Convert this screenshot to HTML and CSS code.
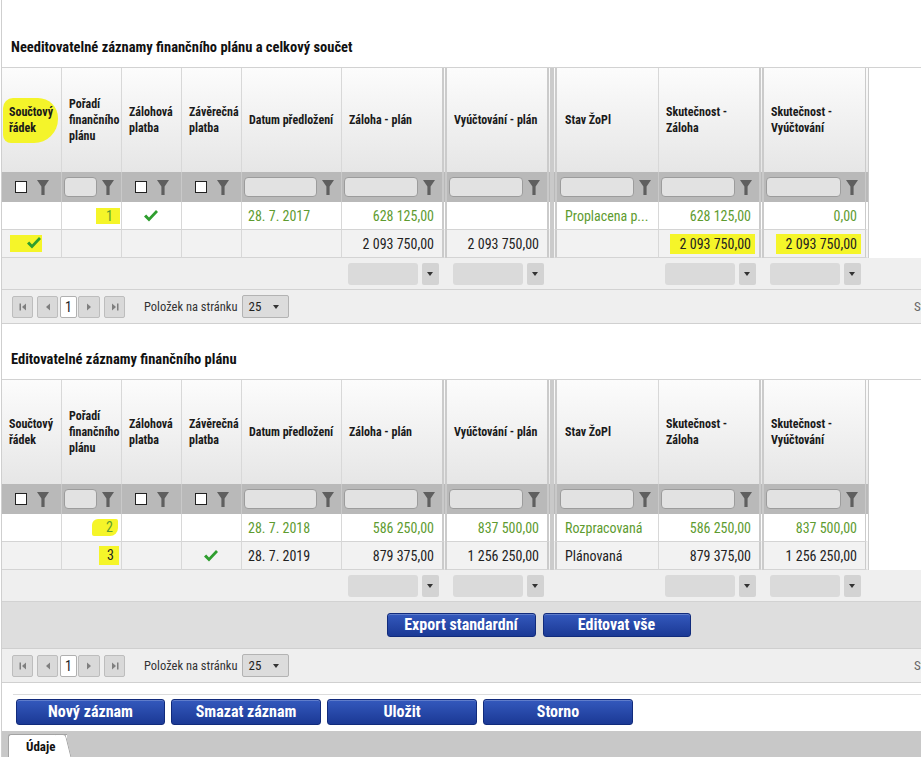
FILE: index.html
```html
<!DOCTYPE html>
<html lang="cs">
<head>
<meta charset="utf-8">
<title>Finanční plán</title>
<link rel="stylesheet" href="styles.css">
</head>
<body>
<div class="page">

  <h2 class="sec-title first">Needitovatelné záznamy finančního plánu a celkový součet</h2>
  <div class="grid">
    <div class="row head">
      <div class="c c1h"><span class="hl-head">Součtový<br>řádek</span></div>
      <div class="c">Pořadí<br>finančního<br>plánu</div>
      <div class="c">Zálohová<br>platba</div>
      <div class="c">Závěrečná<br>platba</div>
      <div class="c">Datum předložení</div>
      <div class="c dbl">Záloha - plán</div>
      <div class="c dbl">Vyúčtování - plán</div>
      <div class="c dbl-l">Stav ŽoPl</div>
      <div class="c dbl">Skutečnost -<br>Záloha</div>
      <div class="c end">Skutečnost -<br>Vyúčtování</div>
    </div>
    <div class="row filter">
      <div class="c chk"><span class="cb"></span><svg class="fn" viewBox="0 0 12 16"><path d="M0 1H12L7.6 7.5V16H4.4V7.5Z"/></svg></div>
      <div class="c"><span class="inp"></span><svg class="fn" viewBox="0 0 12 16"><path d="M0 1H12L7.6 7.5V16H4.4V7.5Z"/></svg></div>
      <div class="c chk"><span class="cb"></span><svg class="fn" viewBox="0 0 12 16"><path d="M0 1H12L7.6 7.5V16H4.4V7.5Z"/></svg></div>
      <div class="c chk"><span class="cb"></span><svg class="fn" viewBox="0 0 12 16"><path d="M0 1H12L7.6 7.5V16H4.4V7.5Z"/></svg></div>
      <div class="c"><span class="inp"></span><svg class="fn" viewBox="0 0 12 16"><path d="M0 1H12L7.6 7.5V16H4.4V7.5Z"/></svg></div>
      <div class="c dbl"><span class="inp"></span><svg class="fn" viewBox="0 0 12 16"><path d="M0 1H12L7.6 7.5V16H4.4V7.5Z"/></svg></div>
      <div class="c dbl"><span class="inp"></span><svg class="fn" viewBox="0 0 12 16"><path d="M0 1H12L7.6 7.5V16H4.4V7.5Z"/></svg></div>
      <div class="c dbl-l"><span class="inp"></span><svg class="fn" viewBox="0 0 12 16"><path d="M0 1H12L7.6 7.5V16H4.4V7.5Z"/></svg></div>
      <div class="c dbl"><span class="inp"></span><svg class="fn" viewBox="0 0 12 16"><path d="M0 1H12L7.6 7.5V16H4.4V7.5Z"/></svg></div>
      <div class="c end"><span class="inp"></span><svg class="fn" viewBox="0 0 12 16"><path d="M0 1H12L7.6 7.5V16H4.4V7.5Z"/></svg></div>
    </div>
    <div class="row data green">
      <div class="c"></div>
      <div class="c r"><span class="hl hl-num">1</span></div>
      <div class="c ctr"><svg class="ok" viewBox="0 0 14 12"><path d="M0 6.5L2.2 4.6L5 7.4L12 0L14 2L5 11.5Z"/></svg></div>
      <div class="c"></div>
      <div class="c">28. 7. 2017</div>
      <div class="c dbl r">628 125,00</div>
      <div class="c dbl r"></div>
      <div class="c dbl-l">Proplacena p...</div>
      <div class="c dbl r">628 125,00</div>
      <div class="c end r">0,00</div>
    </div>
    <div class="row data alt">
      <div class="c c1s"><span class="hl hl-chk"><svg class="ok" viewBox="0 0 14 12"><path d="M0 6.5L2.2 4.6L5 7.4L12 0L14 2L5 11.5Z"/></svg></span></div>
      <div class="c"></div>
      <div class="c"></div>
      <div class="c"></div>
      <div class="c"></div>
      <div class="c dbl r">2 093 750,00</div>
      <div class="c dbl r">2 093 750,00</div>
      <div class="c dbl-l"></div>
      <div class="c dbl r"><span class="hl hl-sum">2 093 750,00</span></div>
      <div class="c end r"><span class="hl hl-sum">2 093 750,00</span></div>
    </div>
    <div class="row foot">
      <div class="c"></div><div class="c"></div><div class="c"></div><div class="c"></div><div class="c"></div>
      <div class="c"><span class="dd"></span><span class="dd-btn"></span></div>
      <div class="c"><span class="dd"></span><span class="dd-btn"></span></div>
      <div class="c"></div>
      <div class="c"><span class="dd"></span><span class="dd-btn"></span></div>
      <div class="c"><span class="dd"></span><span class="dd-btn"></span></div>
    </div>
    <div class="pager">
      <span class="pb"><svg viewBox="0 0 10 10"><rect x="1.5" y="1.5" width="1.5" height="7"/><path d="M8 1.5V8.5L4 5Z"/></svg></span>
      <span class="pb pb-prev"><svg viewBox="0 0 10 10"><path d="M7 1.5V8.5L3 5Z"/></svg></span>
      <span class="pnum">1</span>
      <span class="pb pb-next"><svg viewBox="0 0 10 10"><path d="M3 1.5V8.5L7 5Z"/></svg></span>
      <span class="pb pb-last"><svg viewBox="0 0 10 10"><path d="M2 1.5V8.5L6 5Z"/><rect x="7" y="1.5" width="1.5" height="7"/></svg></span>
      <span class="plabel">Položek na stránku</span>
      <span class="sel">25<span class="sel-ar"></span></span>
      <span class="pinfo">Stránka 1 z 1</span>
    </div>
  </div>

  <h2 class="sec-title">Editovatelné záznamy finančního plánu</h2>
  <div class="grid">
    <div class="row head">
      <div class="c">Součtový<br>řádek</div>
      <div class="c">Pořadí<br>finančního<br>plánu</div>
      <div class="c">Zálohová<br>platba</div>
      <div class="c">Závěrečná<br>platba</div>
      <div class="c">Datum předložení</div>
      <div class="c dbl">Záloha - plán</div>
      <div class="c dbl">Vyúčtování - plán</div>
      <div class="c dbl-l">Stav ŽoPl</div>
      <div class="c dbl">Skutečnost -<br>Záloha</div>
      <div class="c end">Skutečnost -<br>Vyúčtování</div>
    </div>
    <div class="row filter">
      <div class="c chk"><span class="cb"></span><svg class="fn" viewBox="0 0 12 16"><path d="M0 1H12L7.6 7.5V16H4.4V7.5Z"/></svg></div>
      <div class="c"><span class="inp"></span><svg class="fn" viewBox="0 0 12 16"><path d="M0 1H12L7.6 7.5V16H4.4V7.5Z"/></svg></div>
      <div class="c chk"><span class="cb"></span><svg class="fn" viewBox="0 0 12 16"><path d="M0 1H12L7.6 7.5V16H4.4V7.5Z"/></svg></div>
      <div class="c chk"><span class="cb"></span><svg class="fn" viewBox="0 0 12 16"><path d="M0 1H12L7.6 7.5V16H4.4V7.5Z"/></svg></div>
      <div class="c"><span class="inp"></span><svg class="fn" viewBox="0 0 12 16"><path d="M0 1H12L7.6 7.5V16H4.4V7.5Z"/></svg></div>
      <div class="c dbl"><span class="inp"></span><svg class="fn" viewBox="0 0 12 16"><path d="M0 1H12L7.6 7.5V16H4.4V7.5Z"/></svg></div>
      <div class="c dbl"><span class="inp"></span><svg class="fn" viewBox="0 0 12 16"><path d="M0 1H12L7.6 7.5V16H4.4V7.5Z"/></svg></div>
      <div class="c dbl-l"><span class="inp"></span><svg class="fn" viewBox="0 0 12 16"><path d="M0 1H12L7.6 7.5V16H4.4V7.5Z"/></svg></div>
      <div class="c dbl"><span class="inp"></span><svg class="fn" viewBox="0 0 12 16"><path d="M0 1H12L7.6 7.5V16H4.4V7.5Z"/></svg></div>
      <div class="c end"><span class="inp"></span><svg class="fn" viewBox="0 0 12 16"><path d="M0 1H12L7.6 7.5V16H4.4V7.5Z"/></svg></div>
    </div>
    <div class="row data green">
      <div class="c"></div>
      <div class="c r"><span class="hl hl-num2">2</span></div>
      <div class="c"></div>
      <div class="c"></div>
      <div class="c">28. 7. 2018</div>
      <div class="c dbl r">586 250,00</div>
      <div class="c dbl r">837 500,00</div>
      <div class="c dbl-l">Rozpracovaná</div>
      <div class="c dbl r">586 250,00</div>
      <div class="c end r">837 500,00</div>
    </div>
    <div class="row data alt">
      <div class="c"></div>
      <div class="c r"><span class="hl hl-num3">3</span></div>
      <div class="c"></div>
      <div class="c ctr"><svg class="ok" viewBox="0 0 14 12"><path d="M0 6.5L2.2 4.6L5 7.4L12 0L14 2L5 11.5Z"/></svg></div>
      <div class="c">28. 7. 2019</div>
      <div class="c dbl r">879 375,00</div>
      <div class="c dbl r">1 256 250,00</div>
      <div class="c dbl-l">Plánovaná</div>
      <div class="c dbl r">879 375,00</div>
      <div class="c end r">1 256 250,00</div>
    </div>
    <div class="row foot">
      <div class="c"></div><div class="c"></div><div class="c"></div><div class="c"></div><div class="c"></div>
      <div class="c"><span class="dd"></span><span class="dd-btn"></span></div>
      <div class="c"><span class="dd"></span><span class="dd-btn"></span></div>
      <div class="c"></div>
      <div class="c"><span class="dd"></span><span class="dd-btn"></span></div>
      <div class="c"><span class="dd"></span><span class="dd-btn"></span></div>
    </div>
    <div class="btnbar">
      <button class="btn w149">Export standardní</button>
      <button class="btn w148">Editovat vše</button>
    </div>
    <div class="pager">
      <span class="pb"><svg viewBox="0 0 10 10"><rect x="1.5" y="1.5" width="1.5" height="7"/><path d="M8 1.5V8.5L4 5Z"/></svg></span>
      <span class="pb pb-prev"><svg viewBox="0 0 10 10"><path d="M7 1.5V8.5L3 5Z"/></svg></span>
      <span class="pnum">1</span>
      <span class="pb pb-next"><svg viewBox="0 0 10 10"><path d="M3 1.5V8.5L7 5Z"/></svg></span>
      <span class="pb pb-last"><svg viewBox="0 0 10 10"><path d="M2 1.5V8.5L6 5Z"/><rect x="7" y="1.5" width="1.5" height="7"/></svg></span>
      <span class="plabel">Položek na stránku</span>
      <span class="sel">25<span class="sel-ar"></span></span>
      <span class="pinfo">Stránka 1 z 1</span>
    </div>
  </div>

  <div class="toolbar">
    <button class="btn w149">Nový záznam</button>
    <button class="btn w150">Smazat záznam</button>
    <button class="btn w150">Uložit</button>
    <button class="btn w150">Storno</button>
  </div>

  <div class="tabs">
    <span class="tab">Údaje</span>
  </div>
</div>
</body>
</html>
```

FILE: styles.css
```css
* { box-sizing: border-box; margin: 0; padding: 0; }
html, body { overflow: hidden; background: #fff; }
body {
  width: 921px;
  height: 757px;
  font-family: "Roboto Condensed", "Liberation Sans Narrow", "Arial Narrow", "DejaVu Sans Condensed", sans-serif;
  font-stretch: condensed;
  color: #222;
}
.page {
  margin-left: 1px;
  width: 1074px;
  min-height: 757px;
  border-left: 1px solid #cfcfcf;
}
.sec-title {
  font-size: 14.5px;
  font-weight: bold;
  line-height: 20px;
  padding: 26px 0 9px 9px;
  color: #111;
}
.sec-title.first { padding-top: 38px; }

.grid { border-top: 1px solid #d2d2d2; }
.row {
  display: grid;
  grid-template-columns: 60px 60px 60px 60px 100px 105px 105px 107px 105px 105px;
  width: 867px;
}
.c {
  display: flex;
  align-items: center;
  min-width: 0;
  padding: 0 8px 0 6px;
  border-right: 1px solid #d8d8d8;
  white-space: nowrap;
  overflow: hidden;
}
.c.dbl { border-right: 5px double #cbcbcb; }
.c.dbl-l { border-left: 5px double #cbcbcb; padding-left: 8px; }
.c.end { border-right: 4px double #cbcbcb; }
.c.r { justify-content: flex-end; }
.c.ctr { justify-content: center; }

/* header */
.head .c {
  height: 104px;
  background: linear-gradient(#fcfcfc, #e6e6e6);
  font-size: 12px;
  font-weight: bold;
  line-height: 16px;
  color: #1a1a1a;
  padding-left: 7px;
}
.head .c.dbl-l { padding-left: 8px; }
.head .c.c1h { padding-left: 1px; }
.hl-head {
  display: inline-block;
  background: #f4f42a;
  padding: 6px 5px 7px 6px;
  border-radius: 10px 20px 24px 8px;
}

/* filter row */
.filter .c {
  height: 30px;
  background: #b9b9b9;
  border-right-color: #c9c9c9;
  padding: 0 7px 0 2px;
  gap: 5px;
}
.filter .c.dbl, .filter .c.end { border-right-color: #c9c9c9; }
.filter .c.dbl-l { border-left-color: #c9c9c9; padding-left: 3px; }
.filter .c.chk { justify-content: center; gap: 10px; padding: 0; }
.inp {
  flex: 1;
  height: 20px;
  background: #e2e2e2;
  border: 1px solid #9c9c9c;
  border-radius: 4px;
}
.cb {
  width: 12px;
  height: 12px;
  background: #fff;
  border: 1.5px solid #222;
}
.fn { width: 12px; height: 16px; fill: #5f5f5f; flex: none; }

/* data rows */
.data .c {
  height: 28px;
  font-size: 14px;
  border-bottom: 1px solid #d4d4d4;
  background: #fff;
}
.data.alt .c { background: #f2f2f2; }
.data.green .c { color: #5e9b30; }
.ok { width: 14px; height: 12px; fill: #2e9e2e; }
.hl { background: #f5f529; }
.hl-num { padding: 0 7px 0 10px; margin-right: -7px; }
.hl-num2 { padding: 0 5px 1px 14px; margin-right: -5px; border-radius: 6px 2px 8px 2px; }
.hl-num3 { padding: 1px 5px 2px 8px; margin-right: -6px; }
.c.c1s { padding-left: 8px; }
.hl-chk {
  display: inline-flex;
  justify-content: flex-end;
  width: 32px;
  height: 17px;
  padding: 2px 1px 0 0;
}
.hl-sum { padding: 2px 4px 2px 10px; margin-right: -4px; }

/* footer aggregate row */
.foot {
  width: 100%;
  background: #efefef;
  border-bottom: 1px solid #d2d2d2;
}
.foot .c {
  height: 31px;
  border: none;
  padding: 0 0 0 6px;
  gap: 4px;
}
.dd {
  width: 70px;
  height: 22px;
  background: #dadada;
  border-radius: 3px;
}
.dd-btn {
  position: relative;
  width: 17px;
  height: 22px;
  background: #d3d3d3;
  border-radius: 2px;
}
.dd-btn::after {
  content: "";
  position: absolute;
  left: 5px;
  top: 9px;
  border-left: 3.5px solid transparent;
  border-right: 3.5px solid transparent;
  border-top: 4px solid #333;
}

/* pager */
.pager {
  display: flex;
  align-items: center;
  height: 34px;
  padding: 0 11px 0 10px;
  background: #efefef;
  border-bottom: 1px solid #d0d0d0;
  font-size: 12px;
  color: #333;
}
.pb {
  display: flex;
  align-items: center;
  justify-content: center;
  width: 21px;
  height: 22px;
  background: #d9d9d9;
  border: 1px solid #bdbdbd;
  border-radius: 2px;
}
.pb svg { width: 10px; height: 10px; fill: #7f7f7f; }
.pb-prev { margin-left: 4px; }
.pnum {
  width: 17px;
  height: 22px;
  margin: 0 1px 0 2px;
  background: #fff;
  border: 1px solid #b0b0b0;
  border-radius: 2px;
  font-size: 14px;
  line-height: 20px;
  text-align: center;
  color: #222;
}
.pb-next { width: 22px; }
.pb-last { margin-left: 4px; }
.plabel { margin-left: 19px; font-size: 12.5px; color: #333; }
.sel {
  position: relative;
  width: 47px;
  height: 23px;
  margin-left: 4px;
  padding-left: 6px;
  background: #dcdcdc;
  border: 1px solid #b3b3b3;
  border-radius: 2px;
  font-size: 13px;
  line-height: 21px;
  color: #222;
}
.sel-ar {
  position: absolute;
  right: 9px;
  top: 9px;
  border-left: 3.5px solid transparent;
  border-right: 3.5px solid transparent;
  border-top: 4px solid #333;
}
.pinfo { margin-left: auto; width: 150px; color: #666; font-size: 13px; }

/* button bars */
.btnbar {
  display: flex;
  justify-content: center;
  gap: 7px;
  height: 47px;
  padding-top: 11px;
  background: #dedede;
  border-bottom: 1px solid #cfcfcf;
}
.btn {
  height: 24px;
  background: linear-gradient(#3459bd, #1b3995);
  border: 1px solid #112b7c;
  border-radius: 3px;
  box-shadow: inset 0 1px 0 rgba(255, 255, 255, 0.22);
  color: #fff;
  font-family: inherit;
  font-stretch: condensed;
  font-size: 16px;
  font-weight: bold;
  line-height: 22px;
  text-align: center;
}
.w148 { width: 148px; }
.w149 { width: 149px; }
.w150 { width: 150px; }

.toolbar {
  display: flex;
  gap: 6px;
  margin: 11px 0 0 11px;
  padding: 4px 0 6px 3px;
  border-top: 1px solid #dcdcdc;
}
.toolbar .btn { height: 26px; line-height: 24px; }

.tabs {
  height: 30px;
  padding: 3px 0 0 6px;
  background: #c8c8c8;
}
.tab {
  position: relative;
  display: inline-block;
  width: 59px;
  height: 27px;
  padding-left: 17px;
  background: #fff;
  border: 1px solid #a3a3a3;
  border-right: none;
  border-bottom: none;
  border-radius: 3px 0 0 0;
  font-size: 13px;
  font-weight: bold;
  line-height: 24px;
  color: #111;
}
.tab::after {
  content: "";
  position: absolute;
  top: -1px;
  right: -6px;
  width: 10px;
  height: 28px;
  background: #fff;
  border-top: 1px solid #a3a3a3;
  border-right: 1px solid #a3a3a3;
  border-radius: 0 3px 0 0;
  transform: skewX(14deg);
  transform-origin: bottom left;
}
```
